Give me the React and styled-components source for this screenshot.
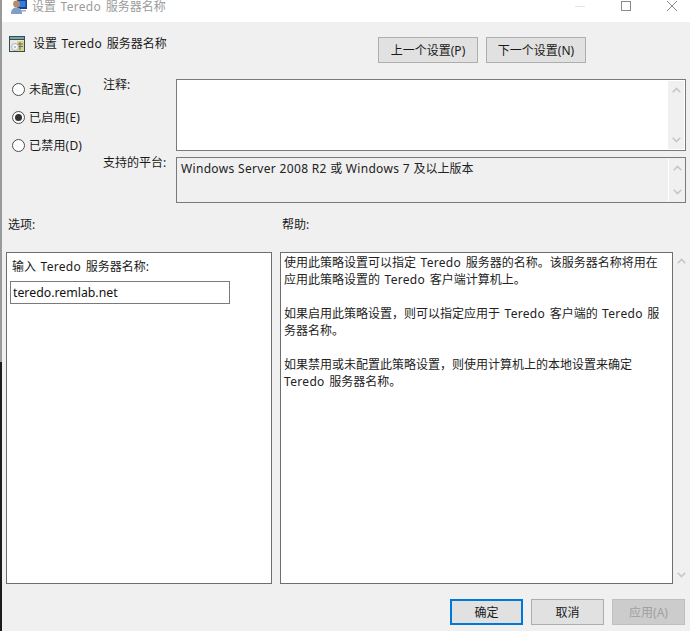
import React from 'react';
import styled, { createGlobalStyle } from 'styled-components';

const Global = createGlobalStyle`
  html, body { margin: 0; padding: 0; background: #fff; }
  * { box-sizing: border-box; }
`;
const FONT = `"Noto Sans", "Noto Sans CJK SC", sans-serif`;

const Page = styled.div`
  width: 690px; height: 631px; display: flex; overflow: hidden;
  font: 12px/17px ${FONT}; color: #1a1a1a;
`;
const Edge = styled.div`
  width: 2px; flex: none; display: flex; flex-direction: column;
`;
const EdgePart = styled.div`
  background: ${p => p.$dark ? '#1c1c1c' : '#9a9a9a'};
  ${p => p.$dark ? 'flex: 1;' : `height: ${p.$h}px;`}
`;
const Win = styled.div`
  flex: 1; min-width: 0; display: flex; flex-direction: column; background: #f0f0f0;
`;
const TitleBar = styled.div`
  height: 22px; flex: none; background: #fff; display: flex; align-items: flex-start;
  padding-left: 9px; color: #9b9b9b;
`;
const TitleText = styled.span`
  margin-left: 5px; line-height: 13px;
`;
const WinControls = styled.div`
  margin-left: auto; margin-right: -5px; display: flex; align-items: flex-start;
`;
const WinBtn = styled.div`
  width: 46px; height: 12px; display: flex; align-items: center; justify-content: center;
`;
const Body = styled.div`
  flex: 1; display: flex; flex-direction: column; padding: 0 0 0 4px; min-height: 0;
`;
const Header = styled.div`
  display: flex; align-items: flex-start; height: 57px; padding-top: 14px; padding-left: 3px;
`;
const HeaderTitle = styled.div`
  margin-left: 8px; margin-top: -1px;
`;
const NavGroup = styled.div`
  margin-left: auto; display: flex; gap: 8px; margin-right: 104px; margin-top: 1px;
`;
const Btn = styled.button`
  height: 26px; width: ${p => p.$w || 73}px; padding: 0; margin: 0;
  font: inherit; color: ${p => p.$disabled ? '#a0a0a0' : '#1a1a1a'};
  background: ${p => p.$disabled ? '#cccccc' : '#e1e1e1'};
  border: ${p => p.$primary ? '2px solid #0078d7' : p.$disabled ? '1px solid #bfbfbf' : '1px solid #adadad'};
`;
const StateRow = styled.div`
  display: flex; height: 124px;
`;
const RadioCol = styled.div`
  width: 97px; flex: none; display: flex; flex-direction: column; gap: 11px; padding: 2px 0 0 6px;
`;
const RadioRow = styled.div`
  display: flex; align-items: center; gap: 4px; height: 17px; letter-spacing: .2px;
`;
const Radio = styled.span`
  width: 13px; height: 13px; border-radius: 50%; border: 1px solid #4d4d4d; background: #fff;
  display: flex; align-items: center; justify-content: center; flex: none;
  &::after { content: ''; width: 7px; height: 7px; border-radius: 50%; background: ${p => p.$on ? '#333' : 'transparent'}; }
`;
const Fields = styled.div`
  flex: 1; display: flex; flex-direction: column; gap: 6px;
`;
const FieldRow = styled.div`
  display: flex; height: ${p => p.$h}px;
`;
const FieldLabel = styled.div`
  width: 73px; flex: none; margin-top: ${p => p.$top}px;
`;
const FieldBox = styled.div`
  width: 510px; flex: none; display: flex; border: 1px solid #7a7a7a;
  background: ${p => p.$gray ? '#f0f0f0' : '#fff'};
`;
const FieldText = styled.div`
  flex: 1; padding: 2px 4px; color: #222;
`;
const Scroll = styled.div`
  width: 17px; flex: none; display: flex; flex-direction: column; justify-content: space-between;
  align-items: center; padding: 7px 0; background: #f0f0f0;
  ${p => p.$line ? 'border-left: 1px solid #fff;' : ''}
  ${p => p.$inset ? 'margin: 1px; width: 16px; padding: 6px 0;' : ''}
`;
const Columns = styled.div`
  display: flex; height: 49px; align-items: flex-start; padding-top: 13px;
`;
const ColLabel = styled.div`
  width: ${p => p.$w}px; flex: none; padding-left: 2px;
`;
const Panels = styled.div`
  display: flex; height: 332px; gap: 8px; flex: none;
`;
const OptionsPanel = styled.div`
  width: 266px; flex: none; background: #fff; border: 1px solid #6e6e6e; padding: 5px 3px 0 3px;
`;
const OptionLabel = styled.div`
  margin: 0 0 6px 2px;
`;
const OptionInput = styled.input`
  display: block; width: 220px; height: 23px; padding: 0 2px; margin: 0;
  border: 1px solid #7a7a7a; font: 12.3px ${FONT}; color: #111; background: #fff; outline: none;
`;
const HelpPanel = styled.div`
  width: 393px; flex: none; background: #fff; border: 1px solid #6e6e6e; padding: 1px 7px 1px 3px;
`;
const HelpPara = styled.p`
  margin: 0 0 17px; color: #222;
`;
const HelpScroll = styled.div`
  flex: none; width: 17px; margin-left: -8px; display: flex; flex-direction: column; justify-content: space-between;
  align-items: center; padding: 6px 0;
`;
const Footer = styled.div`
  flex: 1; display: flex; justify-content: flex-end; gap: 8px; padding: 15px 5px 0 0;
`;
const Latin = styled.span`
  letter-spacing: .33px;
`;
const Term = styled(Latin)`
  padding: 0 1px;
`;

const Chevron = ({ down }) => (
  <svg width="9" height="6" viewBox="0 0 9 6">
    <path d={down ? 'M.7 .7 4.5 4.5 8.3 .7' : 'M.7 5.3 4.5 1.5 8.3 5.3'} fill="none" stroke="#c6c6c6" strokeWidth="1.6" />
  </svg>
);

const TitleIcon = () => (
  <svg width="16" height="14" viewBox="0 0 16 14">
    <rect x="6" y="0" width="10" height="9" fill="#1f3f86" />
    <rect x="7.5" y="1" width="7" height="6" fill="#2f7fe0" />
    <circle cx="5.5" cy="4" r="3.4" fill="#b88a68" />
    <path d="M0 14c0-5 2.5-6.500 5.500-6.500S11 9 11 14z" fill="#7f9fc9" />
    <rect x="10" y="10" width="5" height="1.500" fill="#a8acb2" />
  </svg>
);

const PolicyIcon = () => (
  <svg width="16" height="16" viewBox="0 0 16 16">
    <rect x="0" y="0" width="16" height="16" fill="#2f4f55" />
    <rect x="1" y="1" width="14" height="2" fill="#7aa3a8" />
    <rect x="1" y="4" width="14" height="11" fill="#e8e8e0" />
    <rect x="8" y="5" width="7" height="10" fill="#e8d07a" />
    <path d="M9 8h5M9 10.500h5M11 6v8" stroke="#55707a" strokeWidth="1" />
    <circle cx="6" cy="11" r="3.500" fill="#f4f4f4" stroke="#b0b0b0" />
    <circle cx="6" cy="11" r="1" fill="#9cb7cc" />
  </svg>
);

const Minimize = () => <svg width="10" height="10"><path d="M0 5.500h10" stroke="#e4e4e4" /></svg>;
const Maximize = () => <svg width="10" height="10"><rect x=".5" y=".5" width="9" height="9" fill="none" stroke="#8a8a8a" /></svg>;
const Close = () => <svg width="10" height="10"><path d="M0 0 10 10M10 0 0 10" stroke="#8a8a8a" /></svg>;

const PolicyName = () => <>设置<Term> Teredo </Term>服务器名称</>;

export default function App() {
  return (
    <Page>
      <Global />
      <Edge>
        <EdgePart $h={362} />
        <EdgePart $dark />
      </Edge>
      <Win>
        <TitleBar>
          <TitleIcon />
          <TitleText><PolicyName /></TitleText>
          <WinControls>
            <WinBtn><Minimize /></WinBtn>
            <WinBtn><Maximize /></WinBtn>
            <WinBtn><Close /></WinBtn>
          </WinControls>
        </TitleBar>
        <Body>
          <Header>
            <PolicyIcon />
            <HeaderTitle><PolicyName /></HeaderTitle>
            <NavGroup>
              <Btn $w={100}>上一个设置(P)</Btn>
              <Btn $w={100}>下一个设置(N)</Btn>
            </NavGroup>
          </Header>
          <StateRow>
            <RadioCol>
              <RadioRow><Radio />未配置(C)</RadioRow>
              <RadioRow><Radio $on />已启用(E)</RadioRow>
              <RadioRow><Radio />已禁用(D)</RadioRow>
            </RadioCol>
            <Fields>
              <FieldRow $h={72}>
                <FieldLabel $top={-3}>注释:</FieldLabel>
                <FieldBox>
                  <FieldText />
                  <Scroll $inset><Chevron /><Chevron down /></Scroll>
                </FieldBox>
              </FieldRow>
              <FieldRow $h={46}>
                <FieldLabel $top={-3}>支持的平台:</FieldLabel>
                <FieldBox $gray>
                  <FieldText><Latin>Windows Server 2008 R2 </Latin>或<Latin> Windows 7 </Latin>及以上版本</FieldText>
                  <Scroll $line><Chevron /><Chevron down /></Scroll>
                </FieldBox>
              </FieldRow>
            </Fields>
          </StateRow>
          <Columns>
            <ColLabel $w={274}>选项:</ColLabel>
            <ColLabel $w={300}>帮助:</ColLabel>
          </Columns>
          <Panels>
            <OptionsPanel>
              <OptionLabel>输入<Term> Teredo </Term>服务器名称:</OptionLabel>
              <OptionInput defaultValue="teredo.remlab.net" />
            </OptionsPanel>
            <HelpPanel>
              <HelpPara>使用此策略设置可以指定<Term> Teredo </Term>服务器的名称。该服务器名称将用在应用此策略设置的<Term> Teredo </Term>客户端计算机上。</HelpPara>
              <HelpPara>如果启用此策略设置，则可以指定应用于<Term> Teredo </Term>客户端的<Term> Teredo </Term>服务器名称。</HelpPara>
              <HelpPara>如果禁用或未配置此策略设置，则使用计算机上的本地设置来确定<Term> Teredo </Term>服务器名称。</HelpPara>
            </HelpPanel>
            <HelpScroll><Chevron /><Chevron down /></HelpScroll>
          </Panels>
          <Footer>
            <Btn $primary>确定</Btn>
            <Btn>取消</Btn>
            <Btn $disabled>应用(A)</Btn>
          </Footer>
        </Body>
      </Win>
    </Page>
  );
}
